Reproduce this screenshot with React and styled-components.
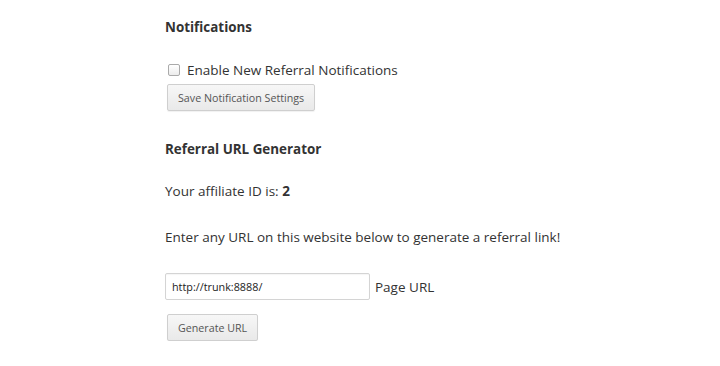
import React from "react";
import styled, { createGlobalStyle } from "styled-components";

const Global = createGlobalStyle`
  html, body { margin: 0; padding: 0; background: #fff; }
  body { font-family: "Open Sans", "Noto Sans", sans-serif; color: #333; }
`;

const Page = styled.div`
  padding: 17px 0 0 165px;
  display: flex;
  flex-direction: column;
  align-items: flex-start;
`;

const Heading = styled.h3`
  margin: ${(p) => p.$top || 0}px 0 0;
  font-size: 13.4px;
  line-height: 20px;
  font-weight: 700;
  color: #333;
`;

const Text = styled.p`
  margin: ${(p) => p.$top || 0}px 0 0;
  font-size: 13.5px;
  line-height: 20px;
  color: #333;
`;

const CheckRow = styled.label`
  margin-top: 23px;
  display: flex;
  align-items: center;
  gap: 7px;
  font-size: 13.5px;
  line-height: 20px;
  color: #333;
  padding-left: 3px;
`;

const Box = styled.span`
  width: 10px;
  height: 10px;
  border: 1px solid #aaa;
  border-radius: 2px;
  background: linear-gradient(#fff, #ececec);
  display: inline-block;
`;

const Button = styled.button`
  margin-top: ${(p) => p.$top || 0}px;
  margin-left: 2px;
  height: 27px;
  padding: 0 ${(p) => p.$pad || 10}px;
  font-family: "Open Sans", "Noto Sans", sans-serif;
  font-size: 10.7px;
  color: #555;
  background: linear-gradient(#f7f7f7, #e9e9e9);
  border: 1px solid #cfcfcf;
  border-radius: 2px;
  box-shadow: 0 1px 1px rgba(0,0,0,0.06);
`;

const InputRow = styled.div`
  margin-top: 26px;
  display: flex;
  align-items: center;
  gap: 5px;
  font-size: 13.5px;
  color: #333;
`;

const Input = styled.div`
  box-sizing: border-box;
  width: 205px;
  height: 27px;
  border: 1px solid #d4d4d4;
  border-radius: 2px;
  padding: 0 6px;
  display: flex;
  align-items: center;
  font-size: 10.8px;
  color: #222;
  box-shadow: inset 0 1px 1px rgba(0,0,0,0.04);
`;

export default function App() {
  return (
    <>
      <Global />
      <Page>
        <Heading>Notifications</Heading>
        <CheckRow>
          <Box />
          Enable New Referral Notifications
        </CheckRow>
        <Button $top={4} $pad={10}>Save Notification Settings</Button>
        <Heading $top={28}>Referral URL Generator</Heading>
        <Text $top={22}>
          Your affiliate ID is: <b>2</b>
        </Text>
        <Text $top={26}>Enter any URL on this website below to generate a referral link!</Text>
        <InputRow>
          <Input>http://trunk:8888/</Input>
          Page URL
        </InputRow>
        <Button $top={14} $pad={10}>Generate URL</Button>
      </Page>
    </>
  );
}
